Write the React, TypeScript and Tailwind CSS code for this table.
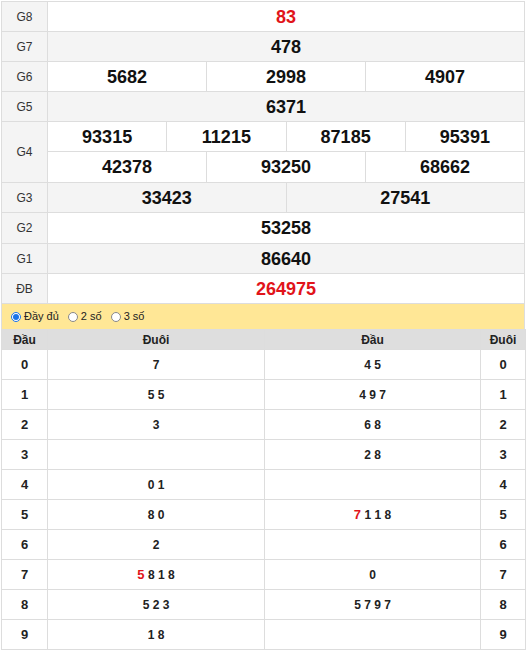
import React from "react";

// ─── Data ────────────────────────────────────────────────────────────────────

type Prize = { label: string; rows: string[][]; red?: boolean; alt?: boolean };

const PRIZES: Prize[] = [
  { label: "G8", rows: [["83"]], red: true },
  { label: "G7", rows: [["478"]], alt: true },
  { label: "G6", rows: [["5682", "2998", "4907"]] },
  { label: "G5", rows: [["6371"]], alt: true },
  { label: "G4", rows: [["93315", "11215", "87185", "95391"], ["42378", "93250", "68662"]] },
  { label: "G3", rows: [["33423", "27541"]], alt: true },
  { label: "G2", rows: [["53258"]] },
  { label: "G1", rows: [["86640"]], alt: true },
  { label: "ĐB", rows: [["264975"]], red: true },
];

type Part = { text: string; red?: boolean };

const LOTO: { dau: Part[]; duoi: Part[] }[] = [
  { duoi: [{ text: "7" }], dau: [{ text: "4 5" }] },
  { duoi: [{ text: "5 5" }], dau: [{ text: "4 9 7" }] },
  { duoi: [{ text: "3" }], dau: [{ text: "6 8" }] },
  { duoi: [], dau: [{ text: "2 8" }] },
  { duoi: [{ text: "0 1" }], dau: [] },
  { duoi: [{ text: "8 0" }], dau: [{ text: "7", red: true }, { text: " 1 1 8" }] },
  { duoi: [{ text: "2" }], dau: [] },
  { duoi: [{ text: "5", red: true }, { text: " 8 1 8" }], dau: [{ text: "0" }] },
  { duoi: [{ text: "5 2 3" }], dau: [{ text: "5 7 9 7" }] },
  { duoi: [{ text: "1 8" }], dau: [] },
];

const cell = "border border-[#dddddd] text-center";

// ─── Component ───────────────────────────────────────────────────────────────

export default function App() {
  return (
    <div
      className="w-[526px] bg-white pl-[1px] pt-[1px] text-[#222]"
      style={{ fontFamily: '"Liberation Sans", Arial, sans-serif' }}
    >
      {/* Prize Table */}
      <table className="w-[524px] table-fixed border-collapse">
        <colgroup>
          <col className="w-[46px]" />
          {Array.from({ length: 12 }).map((_, i) => (
            <col key={i} />
          ))}
        </colgroup>
        <tbody>
          {PRIZES.map((p) =>
            p.rows.map((row, ri) => (
              <tr key={p.label + ri} className={p.alt ? "bg-[#f4f4f4]" : "bg-white"}>
                {ri === 0 && (
                  <td
                    rowSpan={p.rows.length}
                    className={`${cell} bg-[#f4f4f4] text-[12px] text-[#333]`}
                  >
                    {p.label}
                  </td>
                )}
                {row.map((n, ni) => (
                  <td
                    key={ni}
                    colSpan={12 / row.length}
                    className={`${cell} p-0 text-[18px] font-bold leading-none ${
                      (p.label === "G4" && ri === 1) || p.label === "G2" ? "h-[31px]" : "h-[30px]"
                    } ${p.red ? "text-[#e1141a]" : "text-[#111]"}`}
                  >
                    {n}
                  </td>
                ))}
              </tr>
            ))
          )}
        </tbody>
      </table>

      {/* Options Bar */}
      <div className="flex h-[25px] w-[524px] items-center gap-[9px] border-x border-[#dddddd] bg-[#ffe796] pl-[9px] text-[11px] text-[#222]">
        {["Đầy đủ", "2 số", "3 số"].map((l, i) => (
          <label key={l} className="flex items-center gap-[3px]">
            <span
              className={`flex h-[10px] w-[10px] items-center justify-center rounded-full border ${
                i === 0 ? "border-[#1a73e8] bg-white" : "border-[#888] bg-white"
              }`}
            >
              {i === 0 && <span className="h-[6px] w-[6px] rounded-full bg-[#1a73e8]" />}
            </span>
            {l}
          </label>
        ))}
      </div>

      {/* Loto Table */}
      <table className="w-[524px] table-fixed border-collapse text-[12px] font-bold">
        <colgroup>
          <col className="w-[46px]" />
          <col className="w-[217px]" />
          <col className="w-[216px]" />
          <col className="w-[45px]" />
        </colgroup>
        <thead>
          <tr className="h-[20px] bg-[#dedede] text-[#222]">
            <th className={`${cell} p-0`}>Đầu</th>
            <th className={`${cell} p-0`}>Đuôi</th>
            <th className={`${cell} p-0`}>Đầu</th>
            <th className={`${cell} p-0`}>Đuôi</th>
          </tr>
        </thead>
        <tbody>
          {LOTO.map((r, i) => (
            <tr key={i} className="h-[30px] bg-white">
              <td className={`${cell} p-0 text-[13px]`}>{i}</td>
              <td className={`${cell} p-0`}>
                {r.duoi.map((p, pi) => (
                  <span key={pi} className={p.red ? "text-[13px] text-[#e1141a]" : ""}>
                    {p.text}
                  </span>
                ))}
              </td>
              <td className={`${cell} p-0`}>
                {r.dau.map((p, pi) => (
                  <span key={pi} className={p.red ? "text-[13px] text-[#e1141a]" : ""}>
                    {p.text}
                  </span>
                ))}
              </td>
              <td className={`${cell} p-0 text-[13px]`}>{i}</td>
            </tr>
          ))}
        </tbody>
      </table>
    </div>
  );
}
